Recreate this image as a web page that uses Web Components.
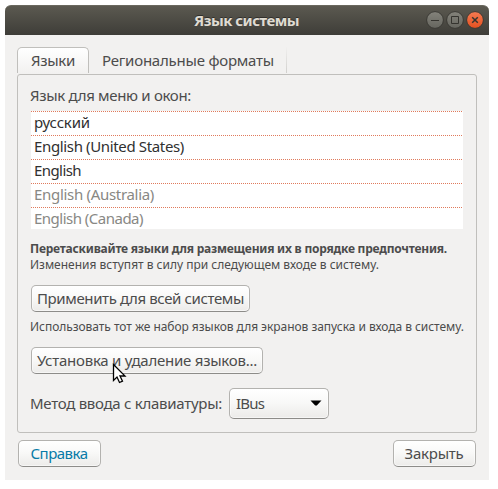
<!DOCTYPE html>
<html lang="ru"><head><meta charset="utf-8"><title>Язык системы</title>
<style>
html,body{margin:0;background:#fff;height:489px;overflow:hidden}
body{font:15px/20px "Noto Sans","Open Sans",sans-serif;color:#4c4c4c}
</style></head><body>
<language-dialog></language-dialog>
<script>
const define=(name,html,ready)=>{
  const t=document.createElement('template');t.innerHTML=html;
  customElements.define(name,class extends HTMLElement{
    constructor(){super();this.attachShadow({mode:'open'}).append(t.content.cloneNode(true));}
    connectedCallback(){if(ready)ready.call(this);}
  });
};
/* One line of text set to a given width by tracking. */
define('text-line',`<style>:host{display:block;white-space:nowrap}span{display:inline-block}</style><span><slot></slot></span>`,function(){
  const s=this.shadowRoot.querySelector('span');
  const n=this.textContent.length,w=+this.getAttribute('w');
  s.style.letterSpacing=((w-s.getBoundingClientRect().width)/n)+'px';
});
define('window-button',`<style>
:host{display:block;width:18px;height:18px}svg{display:block}
.disc{fill:url(#g);stroke:#3a3934}.mark{fill:none;stroke:#35342f;stroke-width:1}
:host([kind=close]) .disc{fill:url(#r)}
.mark{display:none}:host([kind=min]) .min,:host([kind=max]) .max,:host([kind=close]) .close{display:block}
.close{stroke-width:1.5}
</style><svg width="18" height="18" viewBox="0 0 18 18"><defs>
<linearGradient id="g" x2="0" y2="1"><stop stop-color="#84837b"/><stop offset="1" stop-color="#65655e"/></linearGradient>
<linearGradient id="r" x2="0" y2="1"><stop stop-color="#f57b53"/><stop offset="1" stop-color="#e4501f"/></linearGradient></defs>
<circle class="disc" cx="9" cy="9" r="8.4"/>
<path class="mark min" d="M5 9.5h8"/><path class="mark max" d="M5.5 5.5h7v7h-7z"/><path class="mark close" d="M6.2 6.2l5.6 5.6M11.8 6.2l-5.6 5.6"/></svg>`);
define('title-bar',`<style>
:host{display:grid;grid-template-columns:1fr auto 1fr;align-items:center;height:30px;box-sizing:border-box;padding-right:5px;
background:linear-gradient(#5b5950,#3e3d38);border-top:1px solid #6a685e;border-radius:6px 6px 0 0;color:#dfdbd2;font-weight:700;text-shadow:0 -1px #302f2b}
.title{grid-column:2;padding:0 0 2px 4px}.controls{display:flex;gap:2px;justify-content:flex-end;padding-bottom:1px}
</style><div class="title"><slot></slot></div><div class="controls"><window-button kind="min"></window-button><window-button kind="max"></window-button><window-button kind="close"></window-button></div>`);
define('push-button',`<style>
:host{display:block}button{all:unset;display:flex;align-items:center;justify-content:space-between;width:100%;height:100%;box-sizing:border-box;padding:0 6px 1px 5px;
border:1px solid #b3b2af;border-bottom-color:#8d8c89;border-radius:5px;background:linear-gradient(#fff,#f9f9f8 45%,#ecebe9);box-shadow:inset 0 0 0 1px #fff8}
:host([center]) button{justify-content:center}
:host(.combo) button{padding-left:6px}
</style><button><slot></slot></button>`);
define('language-row',`<style>
:host{display:block;height:24px;box-sizing:border-box;padding:1px 0 0 3px;color:#303030;
background:repeating-linear-gradient(90deg,#e07a5c 0 1px,#fff 1px 2px) 0 0/100% 1px no-repeat #fff}
:host([off]){color:#888884}:host(:last-child){height:22px}
</style><slot></slot>`);
define('tab-strip',`<style>
:host{display:flex;height:27px}
.tab{box-sizing:border-box}.on{width:72px;height:26px;border:1px solid #c0bfbc;border-bottom:0;border-radius:5px 5px 0 0;background:linear-gradient(#fff,#f2f1f0);padding:2px 0 0 13px}
.off{width:198px;padding:3px 0 0 13px;border-right:1px solid;border-image:linear-gradient(#f2f1f0,#d0cfcc) 1;height:26px}
</style><div class="tab on"><text-line w="44">Языки</text-line></div><div class="tab off"><text-line w="172">Региональные форматы</text-line></div>`);
define('mouse-pointer',`<style>:host{display:block;position:absolute;left:112px;top:363px}svg{display:block}</style>
<svg width="15" height="22" viewBox="0 0 15 22"><path d="M1.5 1.5V17.5L5 14l2.5 5.5 3-1.4L8 13h5z" fill="#fff" stroke="#000" stroke-width="1.3"/></svg>`);
define('language-dialog',`<style>
:host{display:block;width:484px;height:475px;margin:5px 0 0 5px;background:#f2f1f0;border-radius:6px 6px 0 0}
main{padding:12px 13px 0 12px}
.page{box-sizing:border-box;width:460px;height:359px;border:1px solid #c0bfbc;border-radius:3px;padding:10px 12px 0}
.list{margin:6px 0 0 1px;width:432px;height:118px}
.small{font-size:12px;line-height:15px}
.bold{font-weight:700;margin-top:12px;padding-bottom:1px}
.apply{width:219px;height:27px;margin:13px 0 7px 1px}
.install{width:232px;height:27px;margin:13px 0 14px 1px}
.method{display:flex;align-items:center;gap:7px}
.method>text-line{padding-bottom:2px}
.combo{width:100px;height:31px}
footer{display:flex;justify-content:space-between;margin:7px 0 0 1px}
footer push-button{width:83px;height:27px}.help{color:#077ba8}
</style>
<title-bar><text-line w="105">Язык системы</text-line></title-bar>
<main><tab-strip></tab-strip>
<section class="page">
<text-line w="161">Язык для меню и окон:</text-line>
<div class="list"><language-row><text-line w="56">русский</text-line></language-row>
<language-row><text-line w="150">English (United States)</text-line></language-row>
<language-row><text-line w="47">English</text-line></language-row>
<language-row off><text-line w="120">English (Australia)</text-line></language-row>
<language-row off><text-line w="109">English (Canada)</text-line></language-row></div>
<text-line class="small bold" w="417">Перетаскивайте языки для размещения их в порядке предпочтения.</text-line>
<text-line class="small" w="349">Изменения вступят в силу при следующем входе в систему.</text-line>
<push-button class="apply"><text-line w="207">Применить для всей системы</text-line></push-button>
<text-line class="small" w="434">Использовать тот же набор языков для экранов запуска и входа в систему.</text-line>
<push-button class="install"><text-line w="220">Установка и удаление языков...</text-line></push-button>
<div class="method"><text-line w="192">Метод ввода с клавиатуры:</text-line>
<push-button class="combo"><text-line w="28">IBus</text-line><svg width="12" height="6" viewBox="0 0 12 6"><path d="M.5.5h11L6.8 5.5H5.2z" fill="#000"/></svg></push-button></div>
</section>
<footer><push-button center class="help"><text-line w="57">Справка</text-line></push-button><push-button center><text-line w="59">Закрыть</text-line></push-button></footer>
</main><mouse-pointer></mouse-pointer>`);
</script></body></html>
